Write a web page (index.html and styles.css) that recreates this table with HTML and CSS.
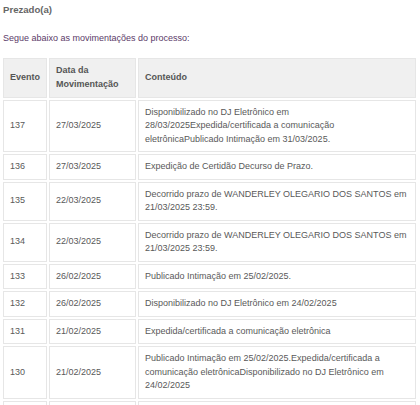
FILE: index.html
```html
<!DOCTYPE html>
<html lang="pt-BR">
<head>
<meta charset="utf-8">
<link rel="stylesheet" href="styles.css">
</head>
<body>
<div class="page">
  <p class="greet">Prezado(a)</p>
  <p class="intro">Segue abaixo as movimentações do processo:</p>
  <table class="mov">
    <thead>
      <tr><th class="c1">Evento</th><th class="c2">Data da Movimentação</th><th class="c3">Conteúdo</th></tr>
    </thead>
    <tbody>
      <tr><td>137</td><td>27/03/2025</td><td>Disponibilizado no DJ Eletrônico em 28/03/2025Expedida/certificada a comunicação eletrônicaPublicado Intimação em 31/03/2025.</td></tr>
      <tr><td>136</td><td>27/03/2025</td><td>Expedição de Certidão Decurso de Prazo.</td></tr>
      <tr><td>135</td><td>22/03/2025</td><td>Decorrido prazo de WANDERLEY OLEGARIO DOS SANTOS em 21/03/2025 23:59.</td></tr>
      <tr><td>134</td><td>22/03/2025</td><td>Decorrido prazo de WANDERLEY OLEGARIO DOS SANTOS em 21/03/2025 23:59.</td></tr>
      <tr><td>133</td><td>26/02/2025</td><td>Publicado Intimação em 25/02/2025.</td></tr>
      <tr><td>132</td><td>26/02/2025</td><td>Disponibilizado no DJ Eletrônico em 24/02/2025</td></tr>
      <tr><td>131</td><td>21/02/2025</td><td>Expedida/certificada a comunicação eletrônica</td></tr>
      <tr><td>130</td><td>21/02/2025</td><td>Publicado Intimação em 25/02/2025.Expedida/certificada a comunicação eletrônicaDisponibilizado no DJ Eletrônico em 24/02/2025</td></tr>
      <tr><td>129</td><td>21/02/2025</td><td>Expedida/certificada a comunicação eletrônica</td></tr>
    </tbody>
  </table>
</div>
</body>
</html>
```

FILE: styles.css
```css
html, body {
  margin: 0;
  padding: 0;
  background: #ffffff;
}
.page {
  padding: 3px 2px 0 1px;
  font-family: "Liberation Sans", Arial, sans-serif;
  font-size: 9px;
  color: #555555;
}
.greet {
  margin: 0 0 0 2px;
  font-weight: bold;
  font-size: 9.6px;
  color: #666666;
  line-height: 14px;
}
.intro {
  margin: 13.5px 0 0 2px;
  color: #5b3a68;
  font-size: 9px;
  line-height: 14px;
}
.mov {
  margin-top: 11px;
  width: 417px;
  border-collapse: separate;
  border-spacing: 2px;
  font-size: 9px;
  line-height: 13.5px;
}
.mov th, .mov td {
  border: 1px solid #e6e6e6;
  padding: 5px 6px;
  text-align: left;
  vertical-align: middle;
}
.mov th {
  background: #f0f0f0;
  font-weight: bold;
  color: #555555;
  height: 28px;
}
.mov td {
  color: #595959;
}
.c1 { width: 29px; }
.c2 { width: 73px; }
```
